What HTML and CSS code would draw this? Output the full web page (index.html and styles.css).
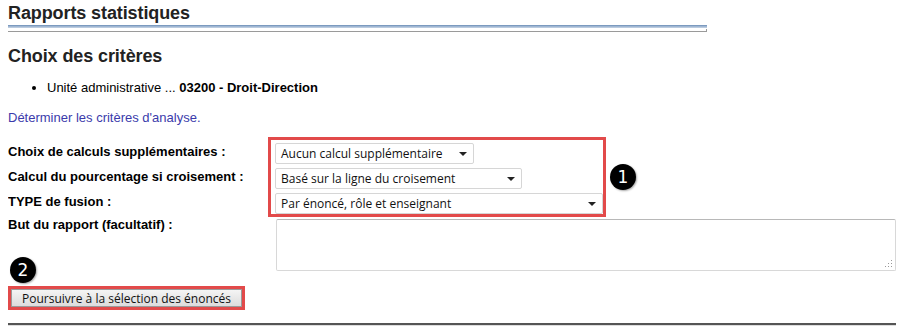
FILE: index.html
```html
<!DOCTYPE html>
<html lang="fr">
<head>
  <meta charset="UTF-8" />
  <title>Rapports statistiques</title>
  <link rel="stylesheet" href="styles.css">
</head>
<body>

  <h1 class="titre">Rapports statistiques</h1>
  <div class="soulignement"></div>

  <h2 class="sous-titre">Choix des critères</h2>

  <ul class="resume">
    <li>Unité administrative ... <b>03200 - Droit-Direction</b></li>
  </ul>

  <p class="consigne">Déterminer les critères d'analyse.</p>

  <!-- Critères -->
  <div class="criteres">
    <div class="etiquettes">
      <div class="etiquette">Choix de calculs supplémentaires :</div>
      <div class="etiquette">Calcul du pourcentage si croisement :</div>
      <div class="etiquette">TYPE de fusion :</div>
    </div>

    <div class="encadre">
      <div class="liste liste-1"><span>Aucun calcul supplémentaire</span><i class="fleche"></i></div>
      <div class="liste liste-2"><span>Basé sur la ligne du croisement</span><i class="fleche"></i></div>
      <div class="liste liste-3"><span>Par énoncé, rôle et enseignant</span><i class="fleche"></i></div>
    </div>

    <span class="pastille pastille-1">1</span>
  </div>

  <div class="ligne-but">
    <div class="etiquette">But du rapport (facultatif) :</div>
    <div class="zone-texte">
      <svg class="poignee" width="9" height="9" viewBox="0 0 9 9">
        <rect x="7" y="1" width="1" height="1" fill="#999"/>
        <rect x="4" y="4" width="1" height="1" fill="#999"/>
        <rect x="7" y="4" width="1" height="1" fill="#999"/>
        <rect x="1" y="7" width="1" height="1" fill="#999"/>
        <rect x="4" y="7" width="1" height="1" fill="#999"/>
        <rect x="7" y="7" width="1" height="1" fill="#999"/>
      </svg>
    </div>
  </div>

  <div class="suite">
    <span class="pastille pastille-2">2</span>
    <div class="encadre-bouton">
      <button class="bouton">Poursuivre à la sélection des énoncés</button>
    </div>
  </div>

  <div class="trait-bas"></div>

</body>
</html>
```

FILE: styles.css
```css
body {
  margin: 0 8px;
  font-family: "Liberation Sans", Arial, sans-serif;
  font-size: 13px;
  color: #000;
  background: #fff;
  overflow: hidden;
}

.titre {
  font-size: 18px;
  font-weight: bold;
  color: #222;
  margin: 0;
  padding-top: 3px;
  line-height: 21px;
  letter-spacing: -0.1px;
}

/* Ligne double sous le titre */
.soulignement {
  width: 700px;
  margin-left: -1px;
  margin-top: 1px;
  height: 3px;
  background: linear-gradient(to bottom, #6a8cb6, #9fb6d2, #c9d6e6);
  border-bottom: 1px solid #fff;
  box-shadow: 0 3px 0 -1px #fff, 0 3px 0 0 #9a9a9a;
}

.sous-titre {
  font-size: 18px;
  font-weight: bold;
  color: #222;
  margin: 17px 0 0;
  line-height: 21px;
  letter-spacing: -0.1px;
}

.resume {
  margin: 13px 0 0;
  padding-left: 39px;
  line-height: 16px;
}

.consigne {
  color: #3b3bab;
  margin: 14px 0 0;
  line-height: 16px;
}

/* Critères */
.criteres {
  display: flex;
  align-items: flex-start;
  margin-top: 11px;
}

.etiquettes {
  width: 260px;
  padding-top: 7px;
}

.etiquette {
  font-weight: bold;
  height: 25px;
  line-height: 16px;
}

.encadre {
  box-sizing: border-box;
  border: 3px solid #e24a4a;
  padding: 3px 1px 0 4px;
  display: flex;
  flex-direction: column;
  gap: 4px;
  width: 338px;
  height: 80px;
}

.liste {
  box-sizing: border-box;
  display: flex;
  align-items: center;
  justify-content: space-between;
  height: 21px;
  border: 1px solid #d6d6d6;
  border-radius: 2px;
  padding: 0 6px 0 5px;
  font-family: "Open Sans", "Noto Sans", sans-serif;
  font-size: 12px;
  color: #111;
  background: #fff;
}

.liste-1 { width: 199px; }
.liste-2 { width: 247px; }
.liste-3 { width: 328px; }

.fleche {
  width: 0;
  height: 0;
  border-left: 4px solid transparent;
  border-right: 4px solid transparent;
  border-top: 4px solid #222;
}

.pastille {
  display: inline-flex;
  justify-content: center;
  align-items: center;
  width: 26px;
  height: 26px;
  border-radius: 50%;
  background: #000;
  color: #fff;
  font-family: "DejaVu Sans", sans-serif;
  font-size: 17px;
  box-shadow: 1px 1px 2px rgba(0, 0, 0, 0.35);
}

.pastille-1 {
  margin: 27px 0 0 4px;
}

.ligne-but {
  display: flex;
  align-items: flex-start;
  margin-top: 0;
}

.ligne-but .etiquette {
  width: 268px;
  margin-top: -2px;
}

.zone-texte {
  position: relative;
  flex: 1;
  height: 50px;
  border: 1px solid #d8d8d8;
  border-top-color: #b8b8b8;
  border-radius: 2px;
}

.poignee {
  position: absolute;
  right: 2px;
  bottom: 2px;
}

.suite {
  display: flex;
  flex-direction: column;
  align-items: flex-start;
  margin-top: -14px;
}

.pastille-2 {
  margin-left: 2px;
}

.encadre-bouton {
  border: 3px solid #e24a4a;
  margin-top: 3px;
}

.bouton {
  display: block;
  margin: 0;
  height: 18px;
  width: 231px;
  padding: 0;
  border: 1px solid #9a9a9a;
  background: linear-gradient(to bottom, #f4f4f4, #dcdcdc);
  font-family: "Open Sans", "Noto Sans", sans-serif;
  font-size: 12px;
  color: #111;
}

.trait-bas {
  margin-top: 13px;
  margin-right: -8px;
  height: 2px;
  background: #555;
  border-bottom: 1px solid #ddd;
}
```
